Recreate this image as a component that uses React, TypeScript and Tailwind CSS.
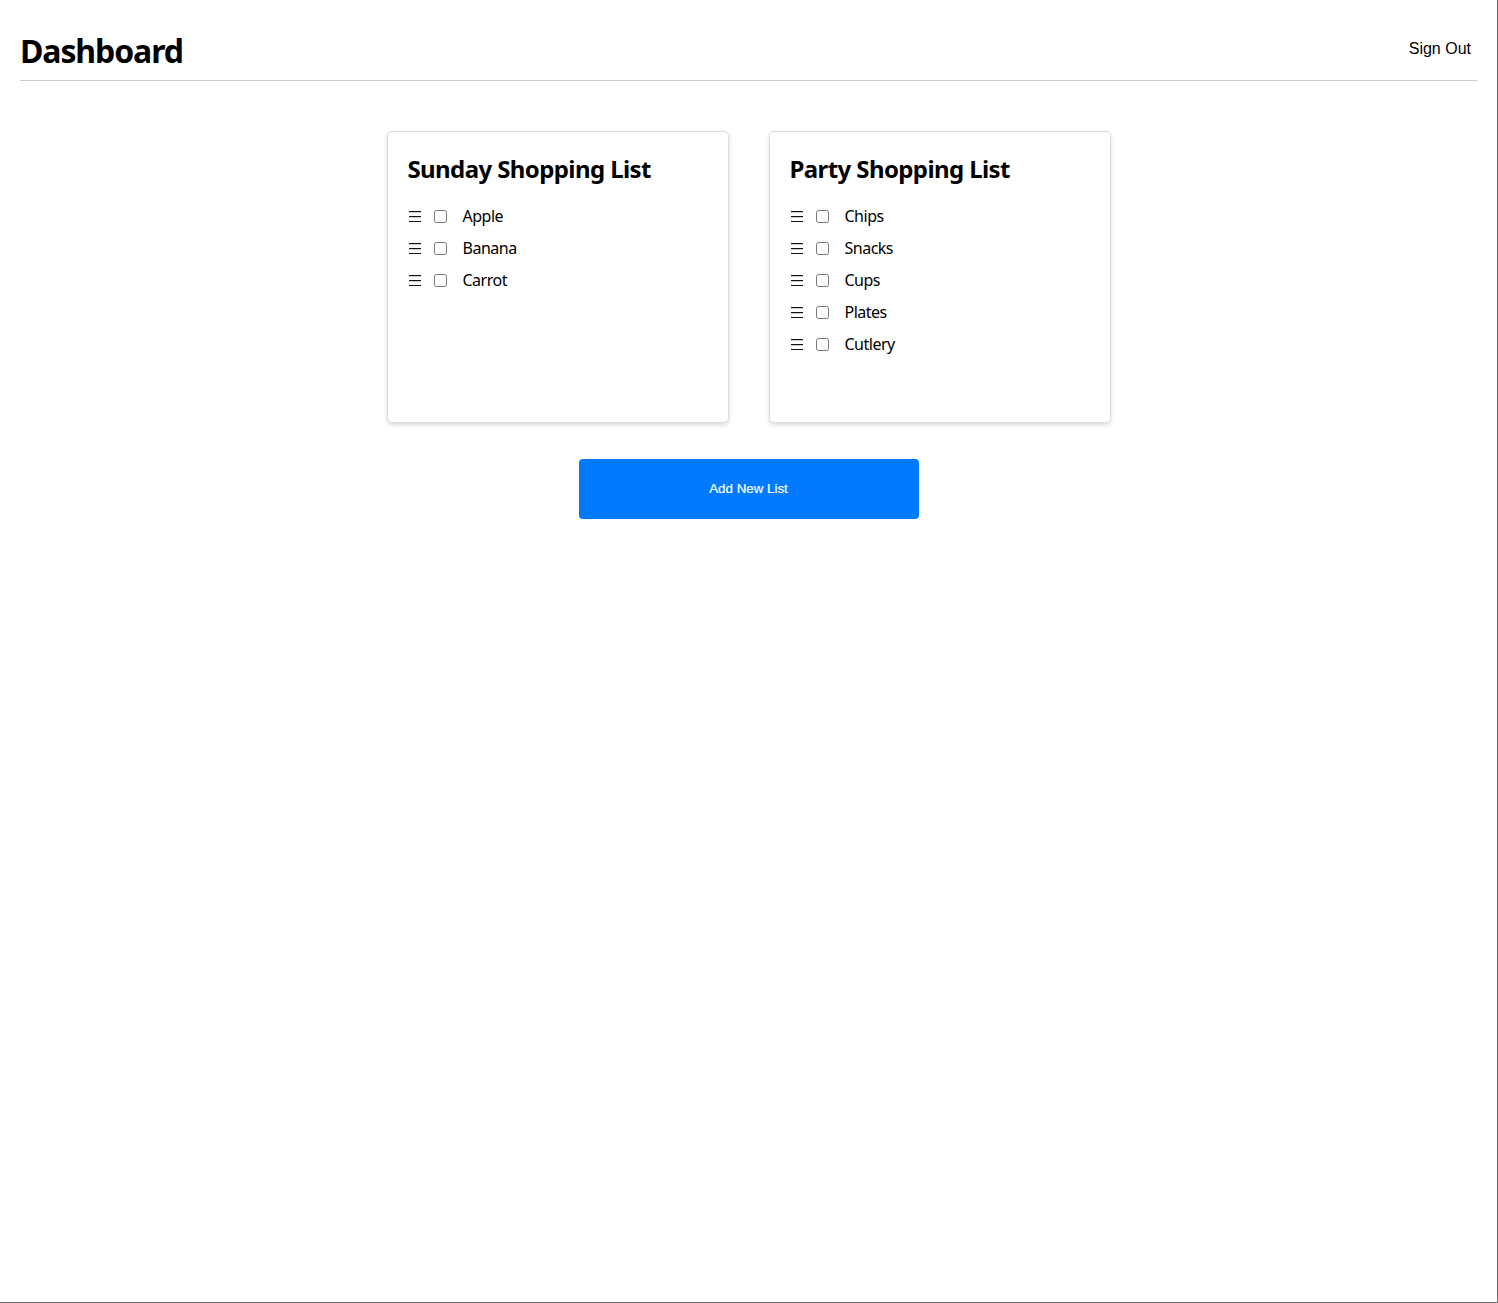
import React from "react";

type ShoppingList = {
  id: number;
  title: string;
  items: string[];
};

const lists: ShoppingList[] = [
  { id: 1, title: "Sunday Shopping List", items: ["Apple", "Banana", "Carrot"] },
  { id: 2, title: "Party Shopping List", items: ["Chips", "Snacks", "Cups", "Plates", "Cutlery"] },
];

const DragHandle = () => (
  <svg width="12" height="11" viewBox="0 0 12 11" className="shrink-0 ml-px">
    <rect x="0" y="0" width="12" height="1.2" fill="#111" />
    <rect x="0" y="5" width="12" height="1.2" fill="#111" />
    <rect x="0" y="10" width="12" height="1.2" fill="#111" />
  </svg>
);

const ListCard = ({ list }: { list: ShoppingList }) => (
  <div className="w-[342px] h-[292px] p-5 bg-white border border-[#ddd] rounded-[5px] shadow-[0_2px_4px_rgba(0,0,0,0.15)]">
    <h2 className="mt-[1px] text-2xl leading-8 font-bold tracking-[-0.6px] text-black">{list.title}</h2>
    <ul className="mt-[15px]">
      {list.items.map((item) => (
        <li key={item} className="flex items-center h-8">
          <DragHandle />
          <input type="checkbox" className="m-0 ml-[13px] w-[13px] h-[13px]" />
          <span className="ml-4 text-base tracking-[-0.5px] text-black">{item}</span>
        </li>
      ))}
    </ul>
  </div>
);

const App = () => {
  return (
    <div className="w-[1498px] h-[1303px] bg-white border-r border-b border-[#6b6b6b] font-['Noto_Sans',sans-serif]">
      <div className="px-5">
        <header className="flex justify-between items-center pt-[31px] pb-[9px] border-b border-[#ccc]">
          <h1 className="text-[32px] leading-10 font-bold tracking-[-1.1px] text-black">Dashboard</h1>
          <button className="mr-[6px] mb-[4px] text-base text-black font-['Liberation_Sans',Arial,sans-serif]">
            Sign Out
          </button>
        </header>
        <main className="flex flex-col items-center pt-[50px]">
          <div className="flex gap-10">
            {lists.map((list) => (
              <ListCard key={list.id} list={list} />
            ))}
          </div>
          <button className="mt-9 w-[340px] h-[60px] bg-[#007bff] rounded-[4px] text-white text-[13.333px] font-normal font-['Liberation_Sans',Arial,sans-serif] [-webkit-text-stroke:0.2px_white]">
            Add New List
          </button>
        </main>
      </div>
    </div>
  );
};

export default App;
